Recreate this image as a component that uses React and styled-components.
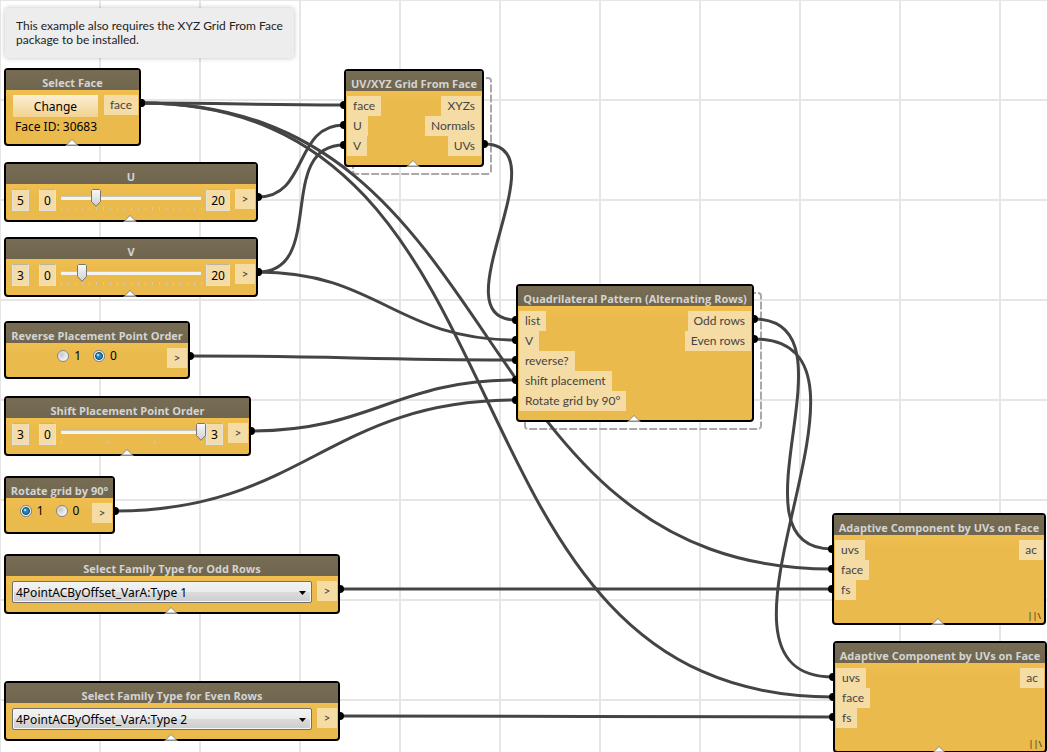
import React, { useState } from "react";
import styled, { createGlobalStyle } from "styled-components";

const GlobalStyle = createGlobalStyle`
  *, *::before, *::after { box-sizing: border-box; }
  body { margin: 0; background: #fff; }
  body, button, input, select { font-family: "Noto Sans", "Open Sans", sans-serif; font-size: 12px; }
`;

const Workspace = styled.main`
  position: relative;
  width: 100%;
  height: 100vh;
  overflow: hidden;
  background:
    linear-gradient(90deg, #e6e6e6 1px, transparent 1px 99px, #e6e6e6 99px) 0 0 / 100px 100px,
    linear-gradient(#e6e6e6 1px, transparent 1px 99px, #e6e6e6 99px) 0 0 / 100px 100px,
    #fff;
`;

const Wires = styled.svg`
  position: absolute;
  inset: 0;
  width: 100%;
  height: 100%;
  fill: none;
`;

const Note = styled.aside`
  position: absolute;
  left: 5px;
  top: 8px;
  width: 289px;
  padding: 11px 10px 11px 11px;
  border-radius: 3px;
  background: #ededed;
  box-shadow: 0 0 5px rgba(0, 0, 0, 0.25);
  color: #222;
  font-family: Lato, "Open Sans", sans-serif;
  line-height: 14px;
`;

const NodeBox = styled.section`
  position: absolute;
  left: ${(p) => p.$x}px;
  top: ${(p) => p.$y}px;
  width: ${(p) => p.$w}px;
  height: ${(p) => p.$h}px;
  border: 2px solid #000;
  border-radius: 4px;
  background: linear-gradient(#f0bf50 20px, #ebba4d 32px);
`;

const Title = styled.h2`
  height: 20px;
  margin: 0;
  padding-top: 4px;
  background: linear-gradient(#776c53, #70664f);
  color: #d4d4d4;
  font: bold 11px/18px "Open Sans", sans-serif;
  text-align: center;
  white-space: nowrap;
`;

const Body = styled.div`
  display: flex;
  justify-content: space-between;
  padding: 5px 1px 0;
`;

const Column = styled.div`
  display: flex;
  flex-direction: column;
  align-items: ${(p) => (p.$end ? "flex-end" : "flex-start")};
`;

const Port = styled.span`
  min-width: 20px;
  height: 20px;
  padding: 0 6px;
  background: #f5dca4;
  color: #444;
  font-family: Lato, "Open Sans", sans-serif;
  line-height: 20px;
  text-align: center;
  white-space: nowrap;
`;

const Controls = styled.div`
  display: flex;
  flex: 1;
  align-items: flex-start;
  padding-left: 5px;
`;

const NumberBox = styled.input`
  width: ${(p) => (p.$wide ? 24 : 17)}px;
  height: 22px;
  margin: 0 ${(p) => (p.$gap ? 10 : 0)}px 0 0;
  padding: 0;
  border: 1px solid #e3e3dc;
  border-top-color: #b9b5a6;
  border-radius: 1px;
  background: #f5dba6;
  color: #000;
  text-align: center;
`;

const thumb = `url("data:image/svg+xml,%3Csvg xmlns='http://www.w3.org/2000/svg' width='10' height='18'%3E%3ClinearGradient id='g' x2='0' y2='1'%3E%3Cstop stop-color='%23fafafa'/%3E%3Cstop offset='1' stop-color='%23cfcfcf'/%3E%3C/linearGradient%3E%3Cpath d='M1.5 .5h7l1 1v11L5 17.3.5 12.5v-11z' fill='url(%23g)' stroke='%23777'/%3E%3C/svg%3E")`;

const SliderBox = styled.div`
  width: 150px;
`;

const Range = styled.input`
  display: block;
  width: 150px;
  height: 18px;
  margin: 0;
  appearance: none;
  background: linear-gradient(#c9c6bb 1px, #f3f3f1 1px) 5px 7px / 140px 4px no-repeat;
  &::-webkit-slider-thumb {
    appearance: none;
    width: 10px;
    height: 18px;
    background: ${thumb};
  }
`;

const Ticks = styled.svg`
  display: block;
  width: 150px;
  height: 3px;
  stroke: #d2c9b0;
`;

const ChangeButton = styled.button`
  width: 85px;
  height: 22px;
  margin-left: 1px;
  padding: 0;
  border: 0;
  background: linear-gradient(#fbeed2, #f2d391);
  color: #000;
`;

const FaceId = styled.p`
  margin: 0;
  padding-left: 3px;
  color: #000;
  line-height: 20px;
`;

const Choices = styled.div`
  display: flex;
  flex: 1;
  justify-content: center;
  gap: 12px;
`;

const Choice = styled.label`
  display: flex;
  align-items: center;
  gap: 5px;
  height: 16px;
  color: #000;
  line-height: 16px;
`;

const RadioFace = styled.span`
  display: grid;
  width: 12px;
  height: 12px;
  > * { grid-area: 1 / 1; }
  > svg { pointer-events: none; }
`;

const Radio = styled.input`
  appearance: none;
  width: 12px;
  height: 12px;
  margin: 0;
  border: 1px solid #858585;
  border-radius: 50%;
  background: radial-gradient(circle at 35% 35%, #c8c8c8, #f4f4f4 70%);
`;

const SelectWrap = styled.div`
  position: relative;
  width: 300px;
`;

const Select = styled.select`
  appearance: none;
  display: block;
  width: 100%;
  height: 22px;
  padding: 0 20px 0 3px;
  border: 1px solid #707070;
  border-radius: 2px;
  background: linear-gradient(#f3f3f3, #ebebeb 50%, #dcdcdc 50%, #cdcdcd);
  box-shadow: inset 0 0 0 1px #f5f5f5;
  color: #000;
`;

const Arrow = styled.svg`
  position: absolute;
  right: 6px;
  top: 10px;
  width: 7px;
  height: 4px;
  pointer-events: none;
`;

const Tab = styled.svg`
  position: absolute;
  left: calc(50% - 8px);
  bottom: -2px;
  width: 14px;
  height: 7px;
`;

const Lacing = styled.span`
  position: absolute;
  right: 3px;
  bottom: 1px;
  color: #54421a;
  font: 600 9px/12px "Open Sans", sans-serif;
`;

function Node({ x, y, w, h, title, children, tab = true, lacing }) {
  return (
    <NodeBox $x={x} $y={y} $w={w} $h={h} aria-label={title}>
      <Title>{title}</Title>
      <Body>{children}</Body>
      {lacing && <Lacing>{"||\\"}</Lacing>}
      {tab && (
        <Tab viewBox="0 0 14 7" aria-hidden="true">
          <path d="M0 7L7 0L14 7Z" fill="#8c8c8c" />
          <path d="M2.5 5.5L7 1L11.5 5.5Z" fill="#fff" />
        </Tab>
      )}
    </NodeBox>
  );
}

function Ports({ inputs, outputs }) {
  return (
    <>
      <Column>{inputs.map((t) => <Port key={t}>{t}</Port>)}</Column>
      <Column $end>{outputs.map((t) => <Port key={t}>{t}</Port>)}</Column>
    </>
  );
}

function SliderNode({ title, initial, max, ...box }) {
  const [value, setValue] = useState(initial);
  const step = 140 / max;
  return (
    <Node title={title} {...box}>
      <Controls>
        <NumberBox $gap aria-label={`${title} value`} value={value} onChange={(e) => setValue(Number(e.target.value) || 0)} />
        <NumberBox aria-label={`${title} minimum`} defaultValue="0" />
        <SliderBox>
          <Range type="range" aria-label={title} min="0" max={max} value={value} onChange={(e) => setValue(Number(e.target.value))} />
          <Ticks viewBox="0 0 150 3" aria-hidden="true">
            {Array.from({ length: max + 1 }, (_, i) => {
              const tx = Math.round(5 + i * step) + 0.5;
              return <path key={i} d={`M${tx} 0V3`} />;
            })}
          </Ticks>
        </SliderBox>
        <NumberBox $wide={max > 9} aria-label={`${title} maximum`} defaultValue={max} />
      </Controls>
      <Port>&gt;</Port>
    </Node>
  );
}

function ToggleNode({ title, initial, ...box }) {
  const [value, setValue] = useState(initial);
  return (
    <Node title={title} tab={false} {...box}>
      <Choices>
        {["1", "0"].map((v) => (
          <Choice key={v}>
            <RadioFace>
              <Radio type="radio" name={title} checked={value === v} onChange={() => setValue(v)} />
              {value === v && (
                <svg viewBox="0 0 12 12" width="12" height="12" aria-hidden="true">
                  <circle cx="6" cy="6" r="5.5" fill="#f6f6f6" stroke="#858585" />
                  <circle cx="6" cy="6" r="3.5" fill="#2089b8" stroke="#123f58" />
                  <circle cx="5" cy="5" r="1.3" fill="#8fdcf7" />
                </svg>
              )}
            </RadioFace>
            {v}
          </Choice>
        ))}
      </Choices>
      <Port>&gt;</Port>
    </Node>
  );
}

function FamilyNode({ title, initial, ...box }) {
  return (
    <Node title={title} {...box}>
      <Controls>
        <SelectWrap>
          <Select aria-label={title} defaultValue={initial}>
            <option>4PointACByOffset_VarA:Type 1</option>
            <option>4PointACByOffset_VarA:Type 2</option>
          </Select>
          <Arrow viewBox="0 0 7 4" aria-hidden="true"><path d="M0 0H7L3.5 4Z" /></Arrow>
        </SelectWrap>
      </Controls>
      <Port>&gt;</Port>
    </Node>
  );
}

const wires = [
  [141, 103, 344, 105],
  [141, 103, 832, 569],
  [141, 103, 833, 697],
  [258, 197, 344, 125],
  [258, 272, 344, 145],
  [258, 272, 516, 340],
  [484, 144, 516, 320],
  [190, 356, 516, 360],
  [251, 431, 516, 380],
  [115, 511, 516, 400],
  [754, 319, 832, 549],
  [754, 339, 833, 677],
  [340, 589, 832, 589],
  [340, 716, 833, 717],
];

function wirePath([x1, y1, x2, y2]) {
  const reach = Math.hypot(x2 - x1, y2 - y1) * 0.45;
  return `M${x1} ${y1}C${x1 + reach} ${y1} ${x2 - reach} ${y2} ${x2} ${y2}`;
}

export default function App() {
  return (
    <>
      <GlobalStyle />
      <Workspace>
        <Wires aria-hidden="true">
          <g stroke="#a9a9a9" strokeWidth="2" strokeDasharray="8 2">
            <rect x="353" y="78" width="138" height="96" rx="3" />
            <rect x="525" y="293" width="236" height="136" rx="3" />
          </g>
          <g stroke="#444" strokeWidth="3">
            {wires.map((w) => <path key={w.join()} d={wirePath(w)} />)}
          </g>
          <g fill="#000">
            {wires.map((w) => (
              <g key={w.join()}>
                <circle cx={w[0]} cy={w[1]} r="4" />
                <circle cx={w[2]} cy={w[3]} r="4" />
              </g>
            ))}
          </g>
        </Wires>

        <Note>This example also requires the XYZ Grid From Face package to be installed.</Note>

        <Node x={4} y={68} w={137} h={78} title="Select Face">
          <Controls>
            <Column>
              <ChangeButton type="button">Change</ChangeButton>
              <FaceId>Face ID: 30683</FaceId>
            </Column>
          </Controls>
          <Port>face</Port>
        </Node>

        <SliderNode x={4} y={162} w={254} h={60} title="U" initial={5} max={20} />
        <SliderNode x={4} y={237} w={254} h={60} title="V" initial={3} max={20} />
        <ToggleNode x={4} y={321} w={186} h={58} title="Reverse Placement Point Order" initial="0" />
        <SliderNode x={4} y={396} w={247} h={60} title="Shift Placement Point Order" initial={3} max={3} />
        <ToggleNode x={4} y={476} w={111} h={58} title="Rotate grid by 90°" initial="1" />
        <FamilyNode x={4} y={554} w={336} h={60} title="Select Family Type for Odd Rows" initial="4PointACByOffset_VarA:Type 1" />
        <FamilyNode x={4} y={681} w={336} h={60} title="Select Family Type for Even Rows" initial="4PointACByOffset_VarA:Type 2" />

        <Node x={344} y={69} w={140} h={98} title="UV/XYZ Grid From Face">
          <Ports inputs={["face", "U", "V"]} outputs={["XYZs", "Normals", "UVs"]} />
        </Node>
        <Node x={516} y={284} w={238} h={138} title="Quadrilateral Pattern (Alternating Rows)">
          <Ports
            inputs={["list", "V", "reverse?", "shift placement", "Rotate grid by 90°"]}
            outputs={["Odd rows", "Even rows"]}
          />
        </Node>
        <Node x={832} y={513} w={214} h={112} title="Adaptive Component by UVs on Face" lacing>
          <Ports inputs={["uvs", "face", "fs"]} outputs={["ac"]} />
        </Node>
        <Node x={833} y={641} w={214} h={112} title="Adaptive Component by UVs on Face" lacing>
          <Ports inputs={["uvs", "face", "fs"]} outputs={["ac"]} />
        </Node>
      </Workspace>
    </>
  );
}
